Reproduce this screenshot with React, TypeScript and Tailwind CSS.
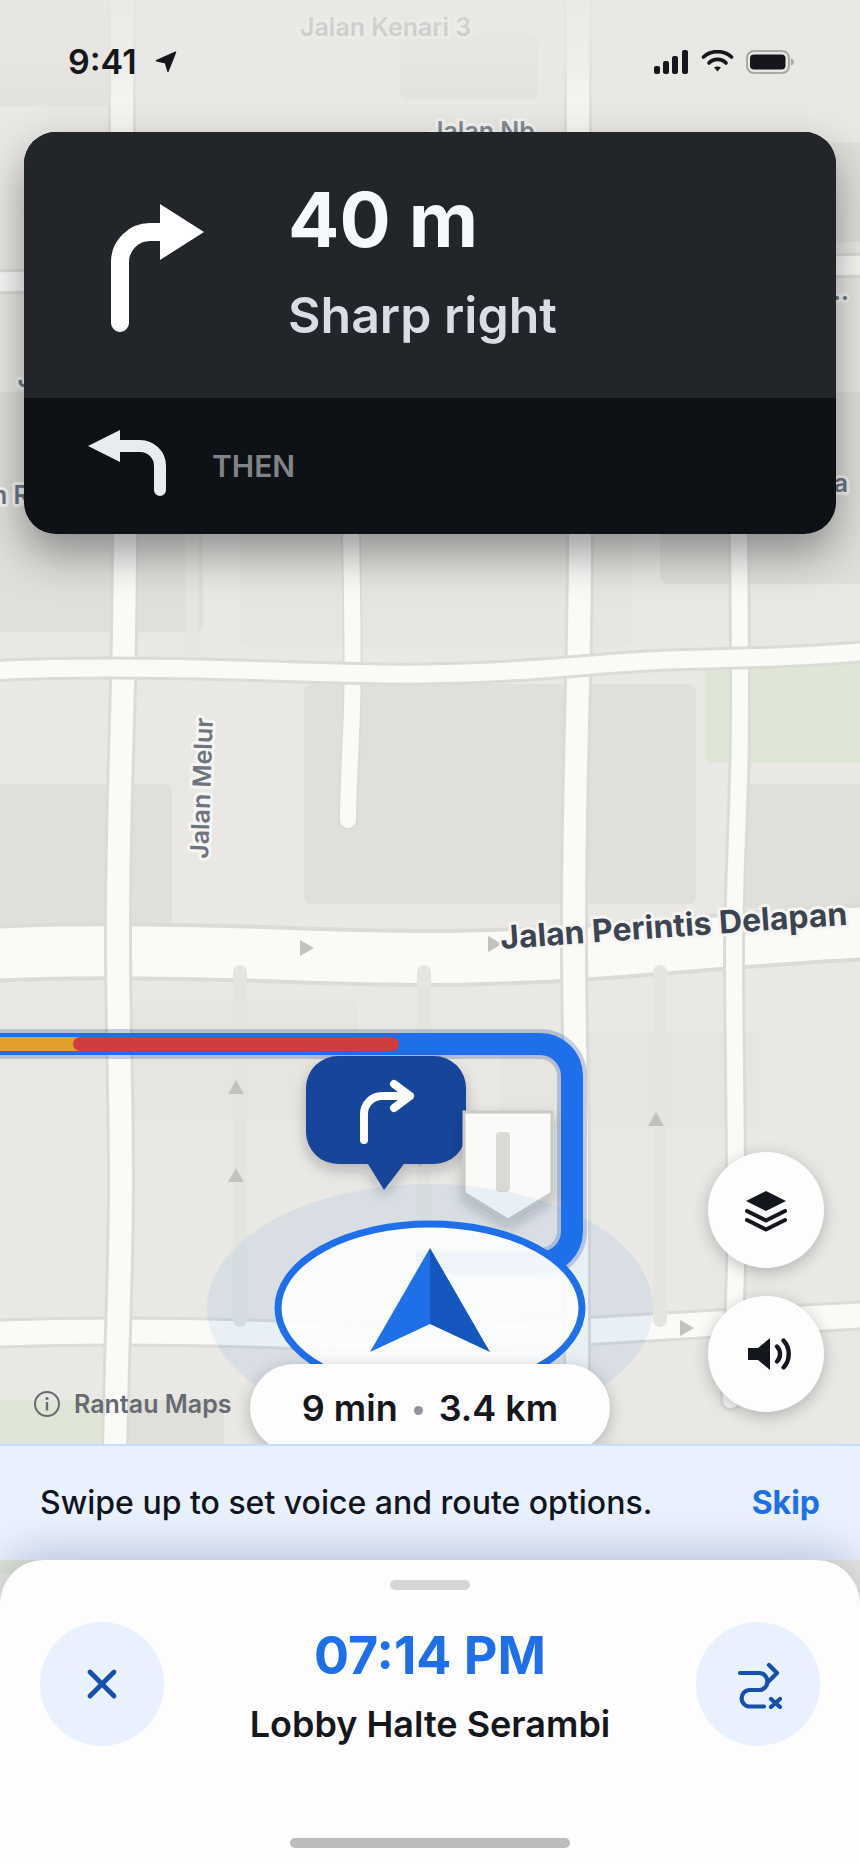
import type { ReactNode } from 'react';

const ROADS = {
  north: 'M-10 282 C200 276 620 272 870 265',
  cross: 'M-10 671 C60 667 150 667 270 671 S420 675 490 672 S610 662 670 660 S800 658 870 651',
  main: 'M-10 954 C60 950 150 950 290 955 S480 958 560 954 S760 937 870 932',
  south: 'M-10 1334 C60 1331 160 1330 290 1335 S500 1337 590 1331 S780 1320 870 1315',
  left: 'M122 -10 V300 C122 400 125 460 125 534 C125 700 118 780 118 930 C118 1040 121 1090 121 1180 C121 1280 116 1360 115 1460',
  stub: 'M351 300 V534 C353 640 353 680 352 710 S348 790 348 820',
  middle: 'M578 -10 V300 C578 400 580 460 580 534 C580 680 574 760 574 930 C574 1040 577 1100 577 1180 V1450',
  right: 'M739 300 V534 C740 640 741 720 739 780 S734 900 734 960 S737 1180 736 1260 S731 1360 731 1400',
};

const LANES = ['M240 972 V1320', 'M424 972 V1320', 'M660 972 V1320'];

// [x, y, rotation] of the one-way markers
const MARKERS = [
  [307, 948, 90],
  [495, 944, 90],
  [687, 1328, 90],
  [236, 1087, 0],
  [236, 1175, 0],
  [420, 1160, 180],
  [656, 1119, 0],
];

const ROUTE = 'M-20 1044 H540 a32 32 0 0 1 32 32 V1231 a32 32 0 0 1 -32 32 H416';

function Road({ d, width, casing = 3 }: { d: string; width: number; casing?: number }) {
  return (
    <g fill="none" strokeLinecap="round">
      <path d={d} stroke="#dbdbd7" strokeWidth={width + casing * 2} />
      <path d={d} stroke="#fafaf7" strokeWidth={width} />
    </g>
  );
}

function MapLabel({
  x,
  y,
  angle = 0,
  major = false,
  anchor = 'start',
  children,
}: {
  x: number;
  y: number;
  angle?: number;
  major?: boolean;
  anchor?: 'start' | 'end';
  children: ReactNode;
}) {
  return (
    <text
      transform={`translate(${x} ${y}) rotate(${angle})`}
      textAnchor={anchor}
      fontSize={major ? 32 : 25}
      fontWeight={major ? 700 : 600}
      fill={major ? '#3c4450' : '#6d7480'}
      stroke="#f5f5f3"
      strokeWidth={6}
      strokeLinejoin="round"
      paintOrder="stroke"
    >
      {children}
    </text>
  );
}

function MapCanvas() {
  return (
    <svg
      className="col-start-1 row-start-1 h-full w-full"
      viewBox="0 0 860 1864"
      preserveAspectRatio="xMidYMin slice"
      role="img"
      aria-label="Map"
    >
      <defs>
        <linearGradient id="top-fade" x1="0" y1="0" x2="0" y2="1">
          <stop offset="0" stopColor="#e9e8e4" stopOpacity="0.88" />
          <stop offset="0.4" stopColor="#e9e8e4" stopOpacity="0.68" />
          <stop offset="1" stopColor="#e9e8e4" stopOpacity="0" />
        </linearGradient>
        <filter id="drop" x="-30%" y="-30%" width="160%" height="170%">
          <feDropShadow dx="0" dy="6" stdDeviation="7" floodColor="#1b2433" floodOpacity="0.26" />
        </filter>
      </defs>
      <rect width="860" height="1864" fill="#e9e8e4" />

      {/* blocks */}
      <g fill="#e0dfda">
        <rect x="-10" y="-10" width="119" height="117" rx="6" />
        <rect x="400" y="34" width="138" height="66" rx="6" />
        <rect x="800" y="142" width="80" height="100" rx="6" />
        <rect x="-10" y="392" width="213" height="240" rx="6" />
        <rect x="660" y="392" width="220" height="192" rx="6" />
        <rect x="304" y="684" width="392" height="220" rx="8" />
        <rect x="-10" y="784" width="182" height="150" rx="6" />
        <rect x="734" y="784" width="140" height="124" rx="6" />
        <rect x="118" y="1400" width="106" height="200" rx="6" />
      </g>
      <g fill="#e6e5df">
        <rect x="240" y="420" width="392" height="227" rx="6" />
        <rect x="130" y="1000" width="228" height="120" rx="6" />
        <rect x="500" y="1032" width="260" height="96" rx="6" />
        <rect x="600" y="1440" width="240" height="90" rx="6" />
        <rect x="185" y="534" width="14" height="122" />
      </g>
      <g fill="#dfe6d8">
        <rect x="705" y="660" width="170" height="103" rx="6" />
        <rect x="-10" y="1400" width="112" height="174" rx="6" />
      </g>

      <Road d={ROADS.north} width={19} />
      <Road d={ROADS.main} width={50} casing={4} />
      <Road d={ROADS.south} width={24} />
      <Road d={ROADS.left} width={22} />
      <Road d={ROADS.stub} width={16} casing={2} />
      <Road d={ROADS.middle} width={22} />
      <Road d={ROADS.right} width={16} />
      <Road d={ROADS.cross} width={17} />

      <g fill="none" stroke="#e5e5e0" strokeWidth="14" strokeLinecap="round">
        {LANES.map((d) => (
          <path key={d} d={d} />
        ))}
      </g>
      {MARKERS.map(([x, y, angle]) => (
        <path
          key={`${x}-${y}`}
          d="M0 -7 L8 7 H-8 Z"
          fill="#c3c3be"
          transform={`translate(${x} ${y}) rotate(${angle})`}
        />
      ))}

      <MapLabel x={300} y={36}>Jalan Kenari 3</MapLabel>
      <MapLabel x={429} y={140}>Jalan Nb</MapLabel>
      <MapLabel x={849} y={300} anchor="end">Jalan…</MapLabel>
      <MapLabel x={17} y={386} angle={8}>Jalan</MapLabel>
      <MapLabel x={-8} y={504}>n Raya</MapLabel>
      <MapLabel x={848} y={492} anchor="end">Jalan Pala</MapLabel>
      <MapLabel x={208} y={859} angle={-88}>Jalan Melur</MapLabel>
      <MapLabel x={501} y={949} angle={-4} major>Jalan Perintis Delapan</MapLabel>

      {/* route with its traffic spans */}
      <g fill="none">
        <path d={ROUTE} stroke="#1e469f" strokeOpacity="0.25" strokeWidth="30" />
        <path d={ROUTE} stroke="#1f6feb" strokeWidth="22" />
        <path d="M-20 1044 H90" stroke="#e0a02b" strokeWidth="14" />
        <path d="M80 1044 H392" stroke="#cf3d3f" strokeWidth="14" strokeLinecap="round" />
      </g>

      {/* next turn */}
      <g filter="url(#drop)">
        <path
          d="M338 1056 H434 a32 32 0 0 1 32 32 V1132 a32 32 0 0 1 -32 32 H404 L384 1190 L368 1164 H338 a32 32 0 0 1 -32 -32 V1088 a32 32 0 0 1 32 -32 Z"
          fill="#16459a"
        />
      </g>
      <path
        d="M364 1140 V1114 a18 18 0 0 1 18 -18 H410 M394 1084 L410 1096 L394 1108"
        fill="none"
        stroke="#fff"
        strokeWidth="8"
        strokeLinecap="round"
        strokeLinejoin="round"
      />

      {/* road shield */}
      <path
        d="M464 1112 H552 V1193 L508 1220 L464 1193 Z"
        fill="#fafaf8"
        stroke="#c9c9c5"
        strokeWidth="3"
        filter="url(#drop)"
      />
      <rect x="496" y="1132" width="14" height="60" rx="4" fill="#d9d9d6" />

      {/* position puck */}
      <ellipse cx="430" cy="1308" rx="223" ry="124" fill="#1f6feb" fillOpacity="0.08" />
      <ellipse
        cx="430"
        cy="1308"
        rx="152"
        ry="84"
        fill="#fcfcfd"
        fillOpacity="0.95"
        stroke="#1f6feb"
        strokeWidth="7"
      />
      <path d="M430 1248 L370 1352 L430 1324 Z" fill="#1f6fe9" />
      <path d="M430 1248 L490 1352 L430 1324 Z" fill="#1657bf" />

      <rect width="860" height="150" fill="url(#top-fade)" />
    </svg>
  );
}

function StatusBar() {
  return (
    <header className="flex h-31 items-center justify-between pr-[66px] pl-17 text-[#15171d]">
      <div className="flex items-center gap-[18px]">
        <span className="text-[34px] leading-10 font-semibold">9:41</span>
        <svg width="22" height="22" viewBox="0 0 22 22" fill="currentColor" aria-hidden="true">
          <path
            d="M20.500 1.200 L13 20.200 L10.500 11.800 L1.500 9.800 Z"
            stroke="currentColor"
            strokeWidth="1.500"
            strokeLinejoin="round"
          />
        </svg>
      </div>
      <div className="flex items-center gap-3">
        <svg width="34" height="24" viewBox="0 0 34 24" fill="currentColor" aria-label="Signal" role="img">
          <rect x="0" y="16" width="6" height="8" rx="2" />
          <rect x="9" y="11" width="6" height="13" rx="2" />
          <rect x="18" y="6" width="6" height="18" rx="2" />
          <rect x="28" y="0" width="6" height="24" rx="2" />
        </svg>
        <svg width="34" height="24" viewBox="0 0 34 24" aria-label="Wi-Fi" role="img">
          <g fill="none" stroke="currentColor" strokeWidth="3.6" strokeLinecap="round">
            <path d="M3.500 7 C11 -.2 24 -.2 31.500 7" />
            <path d="M9 13 C13.500 8.200 21.500 8.200 26 13" />
          </g>
          <path d="M14.100 17.600 C16 16 19 16 20.900 17.600 L17.500 21.400 Z" fill="currentColor" />
        </svg>
        <svg width="48" height="24" viewBox="0 0 48 24" aria-label="Battery" role="img">
          <rect x="1" y="1" width="42" height="22" rx="7" fill="none" stroke="#a8a8a7" strokeWidth="2" />
          <rect x="4" y="4.500" width="35.500" height="15" rx="4" fill="currentColor" />
          <path d="M45 8.500 C47 9 48 10.500 48 12 S47 15 45 15.500 Z" fill="#a8a8a7" />
        </svg>
      </div>
    </header>
  );
}

function ManeuverCard() {
  return (
    <section className="mx-6 overflow-hidden rounded-[32px] bg-[#0e1115] shadow-[0_20px_44px_rgba(20,24,30,0.42)]">
      <div className="flex h-[266px] items-center bg-[#22252a] pt-1 pl-[84px]">
        <svg width="100" height="132" viewBox="0 0 100 132" aria-hidden="true">
          <path d="M12 122 V61 a30 30 0 0 1 30 -30 H54" fill="none" stroke="#fff" strokeWidth="18" strokeLinecap="round" />
          <path d="M52 3 L96 31 L52 59 Z" fill="#fff" />
        </svg>
        <div className="pl-20">
          <p className="text-[76px] leading-24 font-bold text-[#f6f8fc]">40 m</p>
          <p className="text-[50px] leading-24 font-semibold text-[#dadde3]">Sharp right</p>
        </div>
      </div>
      <div className="flex h-34 items-center gap-[46px] pl-16">
        <svg width="78" height="74" viewBox="0 0 78 74" aria-hidden="true">
          <path d="M30 17 H52 a20 20 0 0 1 20 20 V61" fill="none" stroke="#e8ecef" strokeWidth="12" strokeLinecap="round" />
          <path d="M0 17 L32 1 V33 Z" fill="#e8ecef" />
        </svg>
        <span className="text-[30px] leading-9 font-semibold text-[#808488]">THEN</span>
      </div>
    </section>
  );
}

function FloatingButton({ label, children }: { label: string; children: ReactNode }) {
  return (
    <button
      type="button"
      aria-label={label}
      className="flex size-29 items-center justify-center rounded-full bg-[#fdfdfd] text-[#13161d] shadow-[0_4px_16px_rgba(20,24,30,0.25)]"
    >
      {children}
    </button>
  );
}

function MapControls() {
  return (
    <div className="grid flex-1 grid-cols-[1fr_360px_1fr] items-end">
      <a href="#attribution" className="mb-5 flex items-center gap-3 pl-[34px] text-[#666a72]">
        <svg width="28" height="28" viewBox="0 0 28 28" aria-hidden="true">
          <circle cx="13" cy="14" r="12" fill="none" stroke="currentColor" strokeWidth="2" />
          <circle cx="13" cy="8.500" r="1.600" fill="currentColor" />
          <path d="M13 12 V20.500" stroke="currentColor" strokeWidth="2.400" />
        </svg>
        <span className="text-[25px] leading-10 font-semibold whitespace-nowrap">Rantau Maps</span>
      </a>
      <div className="-mb-2 flex h-22 items-center justify-center gap-4 rounded-full bg-[#fdfdfd] text-[36px] leading-10 font-semibold whitespace-nowrap text-[#15171c] shadow-[0_4px_16px_rgba(20,24,30,0.25)]">
        <span>9 min</span>
        <span className="mt-1 size-[9px] rounded-full bg-[#8f959a]" />
        <span>3.4 km</span>
      </div>
      <div className="mr-9 mb-8 flex flex-col gap-7 justify-self-end">
        <FloatingButton label="Map layers">
          <svg width="44" height="44" viewBox="0 0 44 44" aria-hidden="true">
            <path d="M2 13 L22 3 L42 13 L22 23 Z" fill="currentColor" />
            <path
              d="M3 23 L22 32.500 L41 23 M3 32 L22 41.500 L41 32"
              fill="none"
              stroke="currentColor"
              strokeWidth="4"
              strokeLinecap="round"
              strokeLinejoin="round"
            />
          </svg>
        </FloatingButton>
        <FloatingButton label="Sound">
          <svg width="52" height="40" viewBox="0 0 52 40" aria-hidden="true">
            <path d="M8 14 H18 L30 4 V36 L18 26 H8 Z" fill="currentColor" />
            <path
              d="M37 12.500 C41 16.500 41 23.500 37 27.500 M43.500 6.500 C50.500 14 50.500 26 43.500 33.500"
              fill="none"
              stroke="currentColor"
              strokeWidth="4.400"
              strokeLinecap="round"
            />
          </svg>
        </FloatingButton>
      </div>
    </div>
  );
}

function HintBar() {
  return (
    <div className="relative flex h-29 items-center justify-between border-t-2 border-[#c8dcfb] bg-[#e9f0fe] px-10 text-[32px] leading-10">
      <p className="font-medium text-[#101521]">Swipe up to set voice and route options.</p>
      <button type="button" className="font-bold text-[#1f6feb]">
        Skip
      </button>
    </div>
  );
}

function RoundAction({ label, children }: { label: string; children: ReactNode }) {
  return (
    <button
      type="button"
      aria-label={label}
      className="flex size-31 shrink-0 items-center justify-center rounded-full bg-[#e9f1fe] text-[#1650ab]"
    >
      {children}
    </button>
  );
}

function TripSheet() {
  return (
    <footer className="relative flex flex-col items-center rounded-t-[44px] bg-[#fdfdfd] pt-5 pb-4 shadow-[0_-8px_40px_rgba(20,40,80,0.22)]">
      <div className="h-[10px] w-20 rounded-full bg-[#d4d5d7]" />
      <div className="mt-5 flex w-full items-center justify-between px-10">
        <RoundAction label="End trip">
          <svg width="34" height="34" viewBox="0 0 34 34" aria-hidden="true">
            <path d="M5 5 L29 29 M29 5 L5 29" stroke="currentColor" strokeWidth="4.800" strokeLinecap="round" />
          </svg>
        </RoundAction>
        <div className="pt-3 text-center whitespace-nowrap">
          <p className="text-[52px] leading-[68px] font-bold text-[#1f6feb]">07:14 PM</p>
          <p className="text-[36px] leading-[68px] font-semibold text-[#15171c]">Lobby Halte Serambi</p>
        </div>
        <RoundAction label="Alternative routes">
          <svg width="48" height="52" viewBox="0 -2 48 52" aria-hidden="true">
            <path
              d="M6 13 H25 a8.500 8.500 0 0 1 0 17 H15 a8.300 8.300 0 0 0 0 16.500 H30 M35 5 L43 13 L33 23 M37 39 L46 47 M46 39 L37 47"
              fill="none"
              stroke="currentColor"
              strokeWidth="4.200"
              strokeLinecap="round"
              strokeLinejoin="round"
            />
          </svg>
        </RoundAction>
      </div>
      <div className="mt-20 h-[10px] w-70 rounded-full bg-[#bbbcbd]" />
    </footer>
  );
}

export default function App() {
  return (
    <main className="grid min-h-screen grid-cols-1 grid-rows-1 overflow-hidden bg-[#e9e8e4] font-['Inter',sans-serif]">
      <MapCanvas />
      <div className="relative col-start-1 row-start-1 flex flex-col">
        <StatusBar />
        <div className="mt-2">
          <ManeuverCard />
        </div>
        <MapControls />
        <HintBar />
        <TripSheet />
      </div>
    </main>
  );
}
